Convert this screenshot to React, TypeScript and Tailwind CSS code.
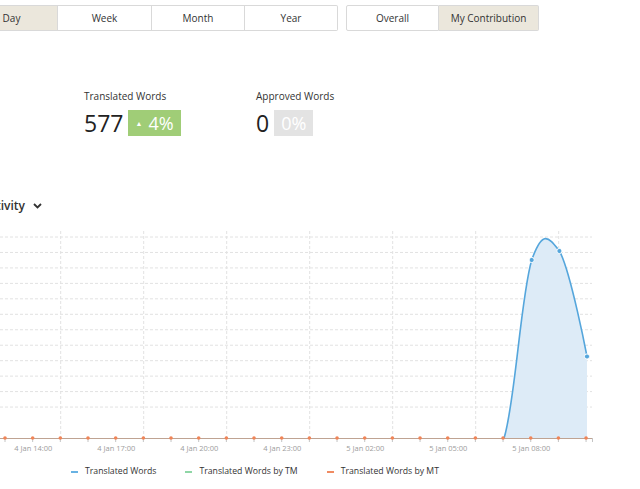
import React from "react";

const periods = ["Day", "Week", "Month", "Year"];

const hGrid = Array.from({ length: 13 }, (_, i) => 236 + i * 15.46);
const vGrid = Array.from({ length: 7 }, (_, i) => 60.7 + i * 83);
const points = Array.from({ length: 22 }, (_, i) => 5 + i * 27.67);
const labels = [
  "4 Jan 14:00",
  "4 Jan 17:00",
  "4 Jan 20:00",
  "4 Jan 23:00",
  "5 Jan 02:00",
  "5 Jan 05:00",
  "5 Jan 08:00",
];

const curve =
  "M504.1,437 C515.1,401.6 520.7,296.2 531.7,259 C542.8,228 548.3,236 559.4,250 C570.4,269.2 587,355.5 587,355.5";

function Tabs() {
  return (
    <div className="flex pt-[5px] text-[10px] text-[#333]">
      <div className="flex ml-[-35px]">
        {periods.map((p, i) => (
          <div
            key={p}
            className={
              "h-[26px] flex items-center justify-center border border-[#d9d9d9] " +
              (i === 0 ? "w-[93px] bg-[#ebe7dc]" : "border-l-0 bg-white ") +
              (i === 1 ? "w-[94px]" : i > 1 ? "w-[93px]" : "") +
              (i === 3 ? " rounded-r-[2px]" : "")
            }
          >
            {p}
          </div>
        ))}
      </div>
      <div className="flex ml-[8px]">
        <div className="h-[26px] w-[93px] flex items-center justify-center border border-[#d9d9d9] rounded-l-[2px] bg-white">
          Overall
        </div>
        <div className="h-[26px] w-[100px] flex items-center justify-center border border-l-0 border-[#d9d9d9] rounded-r-[2px] bg-[#ebe7dc]">
          My Contribution
        </div>
      </div>
    </div>
  );
}

function Stat({ label, value, pct, up }: { label: string; value: string; pct: string; up?: boolean }) {
  return (
    <div className="flex flex-col">
      <div className="text-[10px] leading-[15px] text-[#333]">{label}</div>
      <div className="flex items-center mt-[6px]">
        <span className="text-[23px] leading-none text-[#222]">{value}</span>
        <span
          className={
            "ml-[5px] h-[26px] flex items-center px-[7px] text-white text-[18px] leading-none " +
            (up ? "bg-[#a0cd77]" : "bg-[#e3e3e3]")
          }
        >
          {up && <span className="text-[7px] mr-[6px]">▲</span>}
          {pct}
        </span>
      </div>
    </div>
  );
}

function Chart() {
  return (
    <svg width="640" height="240" viewBox="0 220 640 240" className="block">
      {hGrid.slice(0, 12).map((y) => (
        <line key={y} x1="0" x2="592" y1={y} y2={y} stroke="#e2e2e2" strokeDasharray="3 2" />
      ))}
      {vGrid.map((x) => (
        <line key={x} x1={x} x2={x} y1="230" y2="437" stroke="#e2e2e2" strokeDasharray="3 2" />
      ))}
      <path d={curve + " L587,437 Z"} fill="#ddebf7" />
      <path d={curve} fill="none" stroke="#55a6dc" strokeWidth="1.6" />
      <line x1="0" x2="592" y1="437.5" y2="437.5" stroke="#bfa392" />
      {points.map((x) => (
        <line key={"t" + x} x1={x} x2={x} y1="437" y2="441" stroke="#c4c4c4" />
      ))}
      <line x1="592.5" x2="592.5" y1="437" y2="441" stroke="#c4c4c4" />
      {points.map((x) => (
        <circle key={"o" + x} cx={x} cy="437" r="1.8" fill="#f08457" />
      ))}
      {[
        [531.7, 259],
        [559.4, 250],
        [587, 355.5],
      ].map(([x, y]) => (
        <circle key={"b" + x} cx={x} cy={y} r="2.6" fill="#55a6dc" stroke="#fff" strokeWidth="1" />
      ))}
      {labels.map((l, i) => (
        <text
          key={l}
          x={33.3 + i * 83}
          y="450"
          textAnchor="middle"
          fontSize="7.5"
          fill="#9c9c9c"
          fontFamily="'Open Sans', sans-serif"
        >
          {l}
        </text>
      ))}
    </svg>
  );
}

function Legend() {
  const items = [
    { label: "Translated Words", color: "bg-[#68b2e3]", ml: "ml-[71px]" },
    { label: "Translated Words by TM", color: "bg-[#8fd6a6]", ml: "ml-[29px]" },
    { label: "Translated Words by MT", color: "bg-[#f08b62]", ml: "ml-[29px]" },
  ];
  return (
    <div className="flex items-center text-[8.7px] text-[#333] mt-[4px]">
      {items.map((it) => (
        <div key={it.label} className={"flex items-center " + it.ml}>
          <span className={"w-[7px] h-[2px] mr-[7px] " + it.color} />
          {it.label}
        </div>
      ))}
    </div>
  );
}

export default function App() {
  return (
    <div className="w-[640px] h-[489px] overflow-hidden bg-white font-['Open_Sans',sans-serif]">
      <Tabs />
      <div className="flex mt-[58px] ml-[84px]">
        <div className="w-[172px]">
          <Stat label="Translated Words" value="577" pct="4%" up />
        </div>
        <Stat label="Approved Words" value="0" pct="0%" />
      </div>
      <div className="flex items-center mt-[61px] ml-[-18px] text-[12px] font-semibold text-[#333]">
        Activity
        <svg width="9" height="6" viewBox="0 0 9 6" className="ml-[8px]">
          <path d="M1 1 L4.5 4.5 L8 1" fill="none" stroke="#333" strokeWidth="1.8" />
        </svg>
      </div>
      <div className="mt-[6px]">
        <Chart />
      </div>
      <Legend />
    </div>
  );
}
